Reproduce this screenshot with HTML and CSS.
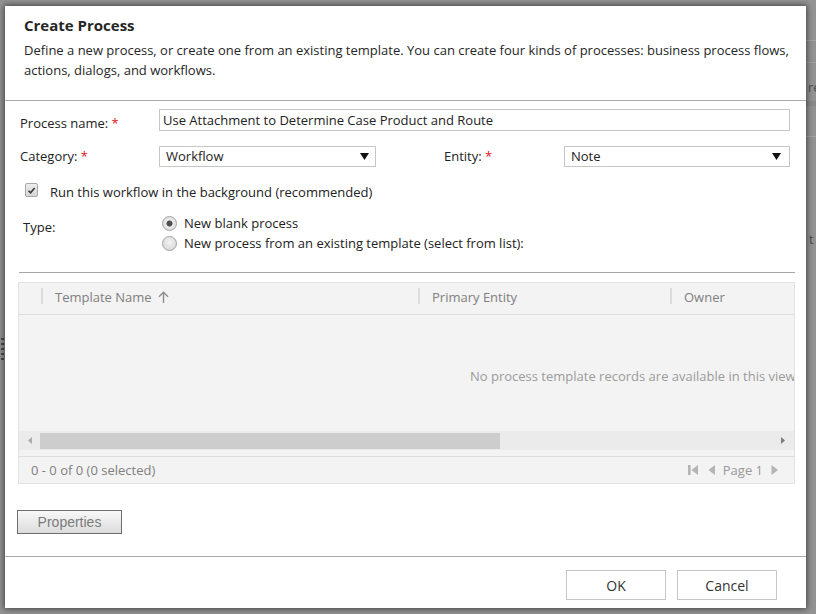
FILE: index.html
```html
<!DOCTYPE html>
<html>
<head>
<meta charset="utf-8">
<title>Create Process</title>
<link rel="stylesheet" href="styles.css">
</head>
<body>
<div class="backdrop">
  <div class="bd-line bd-l1"></div>
  <div class="bd-line bd-l2"></div>
  <div class="bd-band"></div>
  <div class="bd-line bd-l3"></div>
  <span class="bd-text bd-t1">re</span>
  <span class="bd-text bd-t2">t</span>
  <div class="grip"><i></i><i></i><i></i><i></i><i></i></div>
</div>

<div class="dialog">
  <div class="head">
    <h1 class="title">Create Process</h1>
    <p class="desc">Define a new process, or create one from an existing template. You can create four kinds of processes: business process flows, actions, dialogs, and workflows.</p>
  </div>

  <div class="body">
    <div class="row row-name">
      <label class="lbl">Process name: <span class="req">*</span></label>
      <div class="input">Use Attachment to Determine Case Product and Route</div>
    </div>

    <div class="row row-cat">
      <label class="lbl">Category: <span class="req">*</span></label>
      <div class="select sel-cat">
        <span>Workflow</span>
        <svg width="9" height="7" viewBox="0 0 9 7"><path d="M0 0H9L4.5 7Z" fill="#111"/></svg>
      </div>
      <label class="lbl lbl-entity">Entity: <span class="req">*</span></label>
      <div class="select sel-ent">
        <span>Note</span>
        <svg width="9" height="7" viewBox="0 0 9 7"><path d="M0 0H9L4.5 7Z" fill="#111"/></svg>
      </div>
    </div>

    <div class="row row-check">
      <span class="checkbox">
        <svg width="13" height="13" viewBox="0 0 13 13"><path d="M3 6.8l2.4 2.4L10.2 3.6" stroke="#3a3a3a" stroke-width="2" fill="none"/></svg>
      </span>
      <span>Run this workflow in the background (recommended)</span>
    </div>

    <div class="row row-type">
      <span class="lbl type-lbl">Type:</span>
      <div class="radios">
        <div class="radio-row"><span class="radio on"></span>New blank process</div>
        <div class="radio-row"><span class="radio"></span>New process from an existing template (select from list):</div>
      </div>
    </div>

    <div class="sep"></div>

    <div class="grid">
      <div class="grid-head">
        <div class="col-check"></div>
        <span class="csep"></span>
        <div class="col col-name">Template Name
          <svg class="sort" width="11" height="12" viewBox="0 0 11 12"><path d="M5.5 1.2V12M1 5.7L5.5 1.2 10 5.7" stroke="#8c8c8c" stroke-width="1.4" fill="none"/></svg>
        </div>
        <span class="csep"></span>
        <div class="col col-entity">Primary Entity</div>
        <span class="csep"></span>
        <div class="col col-owner">Owner</div>
      </div>
      <div class="grid-body">No process template records are available in this view.</div>
      <div class="hscroll">
        <span class="sb-btn sb-left"><svg width="4" height="7" viewBox="0 0 4 7"><path d="M4 0V7L0 3.5Z" fill="#ababab"/></svg></span>
        <div class="thumb"></div>
        <span class="sb-fill"></span>
        <span class="sb-btn sb-right"><svg width="4" height="7" viewBox="0 0 4 7"><path d="M0 0V7L4 3.5Z" fill="#7d7d7d"/></svg></span>
      </div>
      <div class="grid-foot">
        <span>0 - 0 of 0 (0 selected)</span>
        <div class="pager">
          <svg class="pg-first" width="10" height="10" viewBox="0 0 10 10"><rect x="0" y="0" width="2.6" height="10" fill="#b4b4b4"/><path d="M10 0V10L3.4 5Z" fill="#b4b4b4"/></svg>
          <svg class="pg-prev" width="8" height="10" viewBox="0 0 8 10"><path d="M7 0V10L0.5 5Z" fill="#b4b4b4"/></svg>
          <span class="pg-text">Page 1</span>
          <svg class="pg-next" width="8" height="10" viewBox="0 0 8 10"><path d="M0.5 0V10L7 5Z" fill="#b4b4b4"/></svg>
        </div>
      </div>
    </div>

    <button class="props">Properties</button>
  </div>

  <div class="foot">
    <button class="btn">OK</button>
    <button class="btn">Cancel</button>
  </div>
</div>
</body>
</html>
```
FILE: styles.css
```css
* { box-sizing: border-box; }
html, body { margin: 0; padding: 0; }
body {
  width: 816px;
  height: 614px;
  overflow: hidden;
  position: relative;
  background: #939393;
  font-family: "Open Sans", "Noto Sans", sans-serif;
  color: #262626;
}

/* page behind the modal overlay */
.backdrop { position: absolute; inset: 0; }
.bd-line { position: absolute; left: 806px; right: 0; height: 1px; background: #a4a4a4; }
.bd-l1 { top: 40px; }
.bd-l2 { top: 62px; }
.bd-l3 { top: 136px; }
.bd-band { position: absolute; left: 806px; right: 0; top: 101px; height: 5px; background: #8a8a8a; }
.bd-text { position: absolute; font-size: 13px; line-height: 20px; color: #4c4c4c; }
.bd-t1 { left: 808px; top: 77px; }
.bd-t2 { left: 809px; top: 229px; }
.grip { position: absolute; left: 1px; top: 338px; display: flex; flex-direction: column; gap: 3px; }
.grip i { display: block; width: 3px; height: 2px; background: #4a4a4a; }

/* dialog */
.dialog {
  position: absolute;
  left: 5px;
  top: 6px;
  width: 801px;
  height: 602px;
  background: #fff;
  box-shadow: 0 0 6px 1px rgba(0, 0, 0, 0.55);
  display: flex;
  flex-direction: column;
}

.head {
  padding: 9px 10px 20px 19px;
  border-bottom: 1px solid #a7abaf;
}
.title {
  margin: 0;
  font-size: 15px;
  font-weight: 700;
  line-height: 20px;
  color: #262626;
}
.desc {
  margin: 6px 0 0;
  font-size: 13px;
  line-height: 19.5px;
  color: #262626;
}

.body {
  flex: 1;
  padding: 0 16px 0 15px;
  display: flex;
  flex-direction: column;
  align-items: flex-start;
}

.row {
  display: flex;
  align-items: flex-start;
  width: 100%;
  font-size: 13px;
  line-height: 20px;
  color: #222;
}
.lbl { width: 139px; flex: none; white-space: nowrap; }
.req { color: #e3121b; font-size: 13px; }

.row-name { margin-top: 8px; height: 22px; }
.row-name .lbl { padding-top: 4px; }
.input {
  flex: 1;
  height: 22px;
  border: 1px solid #c6c6c6;
  padding: 0 3px;
  line-height: 20px;
  white-space: nowrap;
  color: #222;
}

.row-cat { margin-top: 15px; height: 21px; }
.select {
  height: 21px;
  border: 1px solid #c6c6c6;
  padding: 0 6px 0 6px;
  line-height: 19px;
  display: flex;
  align-items: center;
  justify-content: space-between;
}
.sel-cat { width: 217px; }
.lbl-entity { margin-left: 68px; width: 120px; }
.sel-ent { width: 226px; padding-right: 8px; }

.row-check { margin-top: 15px; }
.checkbox {
  width: 13px;
  height: 14px;
  margin: 1px 12px 0 5px;
  border: 1px solid #a8a8a8;
  border-radius: 2px;
  background: linear-gradient(#ececec, #d6d6d6);
  display: flex;
  align-items: center;
  justify-content: center;
}

.row-type { margin-top: 11px; }
.type-lbl { padding: 4px 0 0 3px; }
.radios { margin-left: 3px; }
.radio-row { display: flex; align-items: flex-start; }
.radio {
  width: 15px;
  height: 15px;
  margin: 3px 7px 0 0;
  border-radius: 50%;
  border: 1px solid #a3a3a3;
  background: radial-gradient(circle at 50% 40%, #f4f4f4, #d2d2d2);
  flex: none;
}
.radio.on {
  background: radial-gradient(circle, #4d4d4d 0 2.6px, #ececec 3.4px, #d4d4d4 100%);
}

.sep {
  margin-top: 19px;
  margin-left: -1px;
  width: 776px;
  height: 1px;
  background: #a4a8ac;
}

.grid {
  margin-top: 9px;
  margin-left: -2px;
  width: 777px;
  border: 1px solid #e2e2e2;
  background: #f3f3f3;
  font-size: 13px;
  line-height: 20px;
  color: #808080;
}
.grid-head {
  height: 32px;
  border-bottom: 1px solid #dedede;
  display: flex;
  align-items: flex-start;
  padding-top: 4px;
}
.col-check { width: 22px; flex: none; }
.csep { width: 2px; height: 16px; margin-top: 1px; background: #dcdcdc; flex: none; }
.col { padding-left: 12px; display: flex; align-items: center; white-space: nowrap; flex: none; }
.col-name { width: 375px; }
.col-name .sort { margin-left: 6px; }
.col-entity { width: 250px; }
.col-owner { flex: 1; }

.grid-body {
  height: 116px;
  padding: 51px 0 0 451px;
  font-size: 13px;
  color: #9b9b9b;
  white-space: nowrap;
  overflow: hidden;
}

.hscroll {
  height: 19px;
  background: #ebebeb;
  display: flex;
  align-items: center;
  margin-bottom: 6px;
}
.sb-btn { display: flex; align-items: center; flex: none; }
.sb-left { width: 21px; padding-left: 9px; }
.thumb { width: 460px; height: 16px; background: #cdcdcd; flex: none; }
.sb-fill { flex: 1; }
.sb-right { width: 19px; padding-left: 6px; }

.grid-foot {
  height: 27px;
  border-top: 1px solid #dcdcdc;
  padding: 3px 15px 0 12px;
  display: flex;
  justify-content: space-between;
  align-items: flex-start;
}
.pager { display: flex; align-items: center; height: 20px; }
.pg-prev { margin-left: 10px; }
.pg-text { margin-left: 7px; color: #999; }
.pg-next { margin-left: 8px; }

.props {
  margin-top: 26px;
  margin-left: -3px;
  width: 105px;
  height: 24px;
  padding: 0;
  border: 1px solid #6e6e6e;
  background: linear-gradient(#f8f8f8, #dcdcdc);
  font-family: "Liberation Sans", Arial, sans-serif;
  font-size: 14px;
  color: #7b7b7b;
}

.foot {
  height: 52px;
  flex: none;
  border-top: 1px solid #a7abaf;
  padding: 13px 29px 0 0;
  display: flex;
  justify-content: flex-end;
  align-items: flex-start;
  gap: 11px;
}
.btn {
  width: 100px;
  height: 30px;
  padding: 0;
  border: 1px solid #c6c6c6;
  background: #fff;
  font-family: "Open Sans", "Noto Sans", sans-serif;
  font-size: 14px;
  color: #333;
}
```
